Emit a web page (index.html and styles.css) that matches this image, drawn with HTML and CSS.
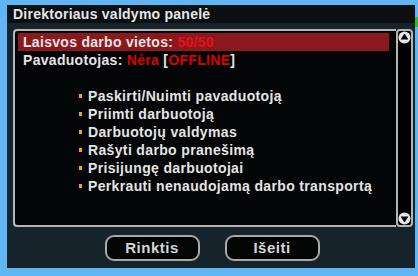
FILE: index.html
```html
<!DOCTYPE html>
<html>
<head>
<meta charset="utf-8">
<link rel="stylesheet" href="styles.css">
</head>
<body>
<div class="desk">
  <div class="window">
    <div class="titlebar">Direktoriaus valdymo panelė</div>
    <div class="wbody">
      <div class="panel">
        <div class="content">
          <div class="line sel">Laisvos darbo vietos: <span class="red">50/50</span></div>
          <div class="line">Pavaduotojas: <span class="red2">Nėra</span> [<span class="red2">OFFLINE</span>]</div>
          <div class="line"></div>
          <ul class="items">
            <li>Paskirti/Nuimti pavaduotoją</li>
            <li>Priimti darbuotoją</li>
            <li>Darbuotojų valdymas</li>
            <li>Rašyti darbo pranešimą</li>
            <li>Prisijungę darbuotojai</li>
            <li>Perkrauti nenaudojamą darbo transportą</li>
          </ul>
        </div>
        <div class="scroll">
          <svg class="arrow" width="13" height="13" viewBox="0 0 13 13"><circle cx="6.5" cy="6.5" r="6" fill="#e8e8e8"/><polygon points="6.5,2.6 10.4,8.6 2.6,8.6" fill="#000"/></svg>
          <svg class="arrow" width="13" height="13" viewBox="0 0 13 13"><circle cx="6.5" cy="6.5" r="6" fill="#e8e8e8"/><polygon points="6.5,10.4 10.4,4.4 2.6,4.4" fill="#000"/></svg>
        </div>
      </div>
      <div class="buttons">
        <div class="btn">Rinktis</div>
        <div class="btn">Išeiti</div>
      </div>
    </div>
  </div>
  <div class="tab"></div>
</div>
</body>
</html>
```
FILE: styles.css
```css
html, body {
  margin: 0;
  padding: 0;
}
body {
  width: 418px;
  height: 276px;
  overflow: hidden;
  background: #5fb6f2;
  font-family: "Liberation Sans", Arial, sans-serif;
  font-weight: bold;
}
.desk {
  display: flex;
  align-items: flex-start;
  padding: 5px 0 0 7px;
}
.window {
  width: 408px;
  height: 263px;
  display: flex;
  flex-direction: column;
  background: #17232a;
}
.tab {
  width: 3px;
  height: 10px;
  margin-top: 12px;
  background: #3bb33b;
}
.titlebar {
  height: 18px;
  background: #0b0f12;
  color: #e6e6e6;
  font-size: 14px;
  letter-spacing: 0.25px;
  line-height: 18px;
  padding-left: 6px;
}
.wbody {
  flex: 1;
  display: flex;
  flex-direction: column;
  padding: 6px 2px 0 6px;
}
.panel {
  display: flex;
  height: 198px;
}
.content {
  flex: 1;
  background: #040506;
  border: 2px solid #b4b4b4;
  border-right: none;
  border-radius: 4px 0 0 4px;
  padding: 2px 7px 0 3px;
  color: #e4e4e4;
  font-size: 14px;
  letter-spacing: 0.3px;
}
.line {
  height: 18px;
  line-height: 18px;
  padding-left: 5px;
  white-space: nowrap;
}
.sel {
  background: #8a191e;
}
.red {
  color: #e8101a;
}
.red2 {
  color: #dc0000;
}
.items {
  list-style: none;
  margin: 0;
  padding: 0 0 0 61px;
}
.items li {
  height: 18px;
  line-height: 18px;
  display: flex;
  align-items: center;
  white-space: nowrap;
  letter-spacing: 0.35px;
}
.items li::before {
  content: "";
  width: 3px;
  height: 4px;
  background: #f5a412;
  margin-right: 6px;
  margin-top: -1px;
}
.scroll {
  width: 13px;
  background: #000;
  border: 2px solid #b4b4b4;
  border-radius: 4px;
  display: flex;
  flex-direction: column;
  justify-content: space-between;
  padding: 0;
}
.arrow {
  display: block;
}
.buttons {
  display: flex;
  justify-content: center;
  gap: 25px;
  margin-top: 8px;
  padding-right: 2px;
}
.btn {
  width: 91px;
  height: 22px;
  border: 2px solid #a8a8a8;
  border-radius: 9px;
  background: #030404;
  color: #d6d6d6;
  font-size: 15px;
  letter-spacing: 0.5px;
  line-height: 22px;
  text-align: center;
}
```
